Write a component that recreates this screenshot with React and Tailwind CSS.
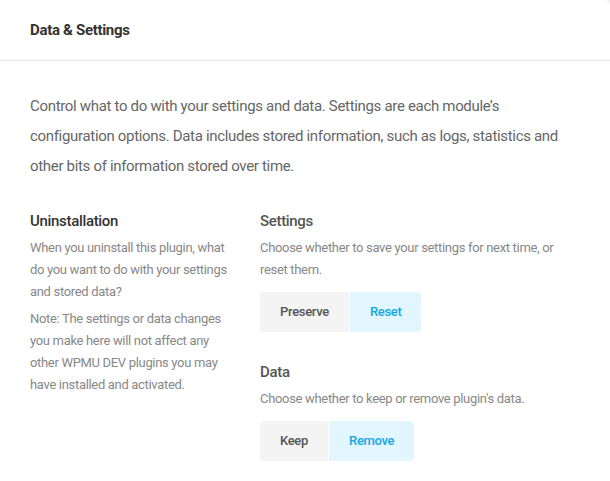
import { useState } from 'react'

function Toggle({ options, value, onChange }) {
  return (
    <div className="mt-[11px] flex gap-px">
      {options.map((opt, i) => {
        const active = opt === value
        return (
          <button
            key={opt}
            onClick={() => onChange(opt)}
            className={[
              'h-10 px-[20px] text-[13px] font-medium',
              i === 0 ? 'rounded-l' : 'rounded-r',
              active ? 'bg-[#e1f6ff] text-[#17a8e3]' : 'bg-[#f4f4f4] text-[#555]',
            ].join(' ')}
          >
            {opt}
          </button>
        )
      })}
    </div>
  )
}

export default function App() {
  const [settings, setSettings] = useState('Reset')
  const [data, setData] = useState('Remove')

  return (
    <div className="bg-[#f1f1f1]">
      <div className="min-h-[481px] bg-white font-[family-name:Roboto,sans-serif] tracking-[-0.02em] rounded-tr-[6px]">
        {/* Header */}
        <div className="flex h-[61px] items-center border-b border-[#e6e6e6] px-[30px]">
          <h2 className="text-[15px] font-bold text-[#333]">Data &amp; Settings</h2>
        </div>

        <div className="px-[30px] pt-[30px]">
          <p className="text-[15px] leading-[30px] text-[#666]">
            Control what to do with your settings and data. Settings are each module’s configuration options. Data includes stored information, such as logs, statistics and other bits of information stored over time.
          </p>

          <div className="mt-[29px] flex gap-[30px]">
            {/* Left */}
            <div className="w-[200px] shrink-0">
              <h3 className="text-[15px] font-medium leading-[22px] text-[#333]">Uninstallation</h3>
              <p className="mt-[5px] text-[13px] leading-[22px] text-[#888]">
                When you uninstall this plugin, what do you want to do with your settings and stored data?
              </p>
              <p className="mt-[5px] text-[13px] leading-[22px] text-[#888]">
                Note: The settings or data changes you make here will not affect any other WPMU DEV plugins you may have installed and activated.
              </p>
            </div>

            {/* Right */}
            <div className="flex-1">
              <h3 className="text-[15px] font-medium leading-[22px] text-[#555]">Settings</h3>
              <p className="mt-[5px] text-[13px] leading-[22px] text-[#888]">
                Choose whether to save your settings for next time, or reset them.
              </p>
              <Toggle options={['Preserve', 'Reset']} value={settings} onChange={setSettings} />

              <h3 className="mt-[29px] text-[15px] font-medium leading-[22px] text-[#555]">Data</h3>
              <p className="mt-[5px] text-[13px] leading-[22px] text-[#888]">
                Choose whether to keep or remove plugin's data.
              </p>
              <Toggle options={['Keep', 'Remove']} value={data} onChange={setData} />
            </div>
          </div>
        </div>
      </div>
    </div>
  )
}
